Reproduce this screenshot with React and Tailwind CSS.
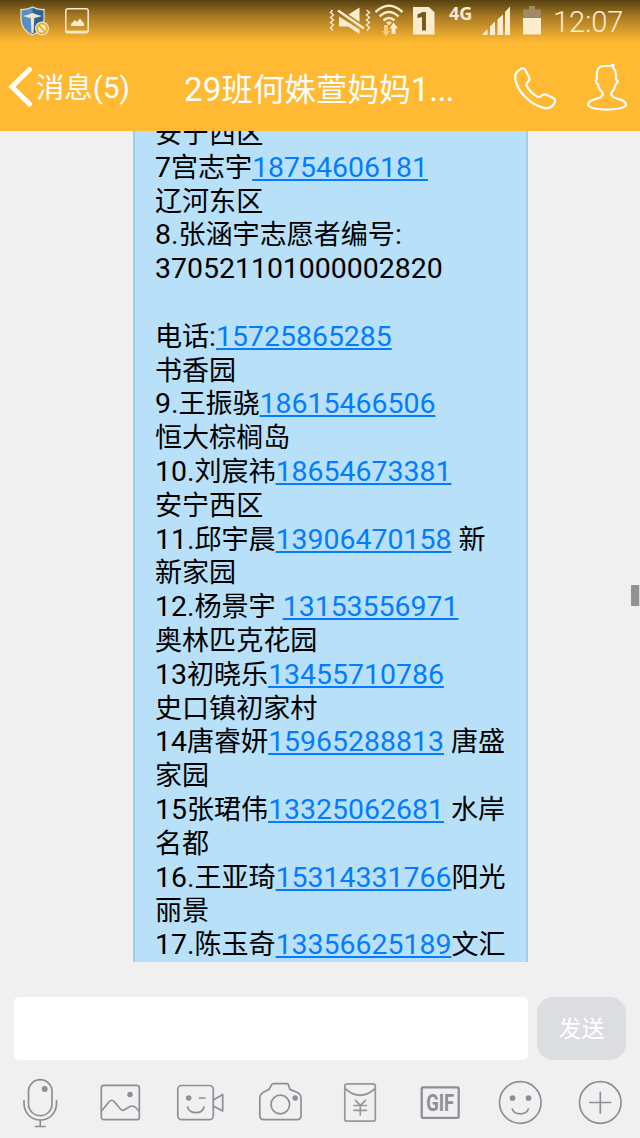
import React from 'react';

const LINES = [
    ['安宁西区'],
    ['7宫志宇', '18754606181'],
    ['辽河东区'],
    ['8.张涵宇志愿者编号:'],
    ['370521101000002820'],
    [],
    ['电话:', '15725865285'],
    ['书香园'],
    ['9.王振骁', '18615466506'],
    ['恒大棕榈岛'],
    ['10.刘宸祎', '18654673381'],
    ['安宁西区'],
    ['11.邱宇晨', '13906470158', ' 新'],
    ['新家园'],
    ['12.杨景宇 ', '13153556971'],
    ['奥林匹克花园'],
    ['13初晓乐', '13455710786'],
    ['史口镇初家村'],
    ['14唐睿妍', '15965288813', ' 唐盛'],
    ['家园'],
    ['15张珺伟', '13325062681', ' 水岸'],
    ['名都'],
    ['16.王亚琦', '15314331766', '阳光'],
    ['丽景'],
    ['17.陈玉奇', '13356625189', '文汇'],
];

// Chinese glyphs are set slightly smaller than the Roboto digits next to them
const Mixed = ({ text }) =>
    text.split(/([\u4e00-\u9fff]+)/).filter(Boolean).map((part, i) => (
        /[\u4e00-\u9fff]/.test(part)
            ? <span key={i} className="text-[0.951em]">{part}</span>
            : <span key={i}>{part}</span>
    ));

const StatusBar = () => (
    <div className="flex h-[42px] items-start bg-linear-to-b from-[#574212] via-[#a97b24] via-40% to-[#ffb932] text-[#fbecd0]">
        <svg className="ml-[20px] mt-[6px]" width="30" height="30" viewBox="0 0 30 30">
            <path d="M12.5 1Q7 4 1 3.5V13Q1 24 12.5 29Q24 24 24 13V3.5Q18 4 12.5 1Z" fill="#5892c4" stroke="#ecdcc0" strokeWidth="1.3" />
            <path d="M12.5 2Q18 5 23.3 4.3V13Q23 23 12.5 28Z" fill="#2d6291" />
            <path d="M3 10Q8 9 12.5 7Q17 9 22 10Q17 11.5 14.3 12L13.5 27H11.5L10.7 12Q7 11.5 3 10Z" fill="#f2e4cb" />
            <circle cx="22" cy="22.5" r="7" fill="#f3e1bc" />
            <circle cx="22" cy="22.5" r="4.8" fill="#fff0d0" stroke="#e9a92c" strokeWidth="1.8" />
            <path d="M18.7 19.2L25.3 25.8" stroke="#e9a92c" strokeWidth="1.8" />
        </svg>
        <svg className="ml-[15px] mt-[8px]" width="24" height="26" viewBox="0 0 24 26">
            <path d="M3 .8H21Q23.2 .8 23.2 3V22.5Q23.2 24.7 21 24.7H3Q.8 24.7 .8 22.5V3Q.8 .8 3 .8Z" fill="none" stroke="currentColor" strokeWidth="1.5" />
            <path d="M1 22.7H23V24.5H1Z" fill="currentColor" />
            <path d="M6 18V16L10 12L12 14L15 10.5L19 15.5V18Z" fill="currentColor" />
        </svg>
        <svg className="ml-[239px] mt-[6px] shrink-0" width="44" height="30" viewBox="0 0 44 30">
            <g fill="none" stroke="currentColor" strokeWidth="1.4">
                <path d="M4.5 4L2.5 6.5L5.5 9L2.5 11.5L5.5 14L2.5 16.5L5.5 19L2.5 21.5L5 24.5" />
                <path d="M38.5 4L41.5 6.5L38.5 9L41.5 11.5L38.5 14L41.5 16.5L38.5 19L41.5 21.5L39 24.5" />
            </g>
            <path d="M31.5 1.5V16L20.5 8.5ZM11 10.5L31.5 23.5V28L20 20.5H11Z" fill="currentColor" />
            <path d="M10 4.5L36 22.5" stroke="currentColor" strokeWidth="2.4" />
        </svg>
        <svg className="ml-[2px] mt-[4px] shrink-0" width="32" height="33" viewBox="0 0 32 33">
            <g fill="none" stroke="currentColor" strokeWidth="2.4">
                <path d="M1.5 8Q15 -4.5 28.5 8" />
                <path d="M5.5 12.5Q15 3.5 24.5 12.5" />
                <path d="M9.5 16.5Q15 11.5 20.5 16.5" />
            </g>
            <path d="M12 18.5Q15 16.5 18 18.5L15 21.5Z" fill="currentColor" />
            <path d="M10 21H14V27H16L12 32L8 27H10Z" fill="#f8cc7d" />
            <path d="M17.5 30H21.5V24.5H24L19.5 18.5L15.5 24.5H17.5Z" fill="currentColor" />
        </svg>
        <svg className="ml-[6px] mt-[7px] shrink-0" width="23" height="28" viewBox="0 0 23 28">
            <path d="M1 0H17L22.5 5.5V27.5H1Z" fill="currentColor" />
            <path d="M5.5 7.5L10.5 5H14V23.5H10V10L5.5 11Z" fill="#79581b" />
        </svg>
        <span className="ml-[14px] mt-[1px] w-[24px] shrink-0 font-['Open_Sans',sans-serif] text-[18px] font-bold leading-[25px]">4G</span>
        <svg className="ml-[8px] mt-[6px] shrink-0" width="31" height="30" viewBox="0 0 31 30">
            <path d="M1 29L6.5 23V29ZM9 29V20.5L14 15.5V29ZM16.5 29V13.5L22 8.5V29ZM24 29V6L29 .5V29Z" fill="currentColor" />
        </svg>
        <svg className="ml-[11px] mt-[6px] shrink-0" width="18" height="29" viewBox="0 0 18 29">
            <path d="M6 0H12V3.5H18V12H0V3.5H6Z" fill="#a28a60" />
            <path d="M0 12H18V28.5H0Z" fill="currentColor" />
        </svg>
        <span className="ml-[12px] mt-[5px] shrink-0 whitespace-nowrap text-[29px] font-light leading-[34px]">12:07</span>
    </div>
);

const Header = () => (
    <div className="flex h-[89px] items-start bg-[#ffb932] text-white">
        <svg className="ml-[8px] mt-[24px] shrink-0" width="25" height="42" viewBox="0 0 25 42">
            <path d="M21.5 3.5L4 20.8L21.5 38" fill="none" stroke="currentColor" strokeWidth="5" strokeLinecap="round" />
        </svg>
        <span className="ml-[3px] mt-[26px] w-[148px] shrink-0 whitespace-nowrap text-[29.8px] leading-[40px]"><Mixed text="消息(5)" /></span>
        <span className="mt-[28px] w-[330px] shrink-0 whitespace-nowrap text-[33.2px] leading-[40px]"><Mixed text="29班何姝萱妈妈1" /><span className="tracking-[-0.7px]">...</span></span>
        <svg className="mt-[25px] shrink-0" width="43" height="43" viewBox="0 0 43 43">
            <path d="M7 1.8L3.2 4.5Q-.2 8 2.2 16Q5.7 25.5 13.5 32Q22 39.8 32.5 41.3Q36.5 41.3 39.2 38L41 35Q41.8 32.5 39.3 31L32.5 27.7Q30 26.5 27.5 28.8Q25.5 30.5 23.5 29.7Q16 25.5 12.5 18.5Q12.2 16.7 14 14.8Q16.2 12.4 15 10L11.5 3.2Q9.8 .6 7 1.8Z" fill="none" stroke="currentColor" strokeWidth="2.2" />
        </svg>
        <svg className="ml-[29px] mt-[21px] shrink-0" width="42" height="48" viewBox="0 0 42 48">
            <path d="M11 9Q12 3.2 17.5 3H24L27.5 1.8L27.2 5Q30.5 7 30 16.5Q32.5 17 31 20L29.5 21.5Q29 26 26 29Q23.5 31.5 28 34.5L36 37.2Q41.5 40 39.5 43Q35 46.5 21 46.6Q7 46.5 2.8 43Q.5 40 6 37.2L14 34.5Q18.5 31.5 16 29Q12.5 26 12 21.5L10.5 20Q9 17 11 16.5Q10.3 13 11 9Z" fill="none" stroke="currentColor" strokeWidth="2.2" strokeLinejoin="round" />
        </svg>
    </div>
);

const Icon = ({ children }) => (
    <div className="flex w-[80px] justify-center">
        <svg width="50" height="52" viewBox="0 0 50 52" fill="none" stroke="#8e8e99" strokeWidth="1.7" strokeLinecap="round" strokeLinejoin="round">
            {children}
        </svg>
    </div>
);

const Toolbar = () => (
    <div className="flex pt-[16px]">
        <Icon>
            <rect x="13.5" y="3.7" width="23.5" height="36" rx="11.7" />
            <path d="M9 24.5V27C9 37 16 44 25.3 44S41.5 37 41.5 27V24.5M25.3 44V50.5M20.5 50.5H30" />
            <circle cx="29.7" cy="13" r="2.1" fill="#8e8e99" stroke="#8e8e99" />
        </Icon>
        <Icon>
            <rect x="6.3" y="9.4" width="38" height="34.3" rx="2.5" />
            <path d="M6.5 35L14.3 25.5Q16.5 23 19 25.5L25.5 33Q27.5 35.3 30 33.5L34 31Q37 29 40 31L44 35" />
            <circle cx="35" cy="18.5" r="1.9" fill="#8e8e99" />
        </Icon>
        <Icon>
            <rect x="2.8" y="9.5" width="35.5" height="34.2" rx="4" />
            <path d="M38.3 24L47.7 18.5V35L38.3 30M24.5 22H30M12.7 31C14 38.5 27.5 38.5 29 31" />
            <circle cx="13.7" cy="22" r="1.9" fill="#8e8e99" />
        </Icon>
        <Icon>
            <path d="M14.3 13.2L16.5 8.8Q17 7.6 18.5 7.6H32Q33.3 7.6 33.6 9L34.8 13.4L42 16.2Q46 18 46 22V39.5Q46 43.7 41.7 43.7H9Q4.8 43.7 4.8 39.5V22Q5 18 8.5 16.2Z" />
            <circle cx="25.3" cy="28.5" r="9.3" />
            <circle cx="40.2" cy="22" r="1.9" fill="#8e8e99" />
        </Icon>
        <Icon>
            <g stroke="#9a9792">
                <rect x="9.8" y="7.8" width="30.5" height="37.4" rx="2.3" />
                <path d="M10 12.5Q25 26 40.2 12.5M20.5 24.3L25.3 29.3L30.5 24.3M19 29.5H31.5M19 34.3H31.5M25.3 29.5V39" />
            </g>
        </Icon>
        <Icon>
            <rect x="6.7" y="11.3" width="37" height="30.5" rx="1" strokeWidth="2.3" />
            <text x="25.2" y="35.3" textAnchor="middle" textLength="28" lengthAdjust="spacingAndGlyphs" fontFamily="Roboto, sans-serif" fontWeight="700" fontSize="24.5" fill="#8e8e99" stroke="none">GIF</text>
        </Icon>
        <Icon>
            <circle cx="25.3" cy="26.5" r="20.8" />
            <path d="M17.3 33C19.5 39.5 31 39.5 33.3 33" />
            <circle cx="17.5" cy="22" r="2" fill="#8e8e99" />
            <circle cx="33.5" cy="22" r="2" fill="#8e8e99" />
        </Icon>
        <Icon>
            <circle cx="25.3" cy="26.5" r="20.8" />
            <path d="M25.3 16.3V37M15 26.5H35.7" />
        </Icon>
    </div>
);

export default function App() {
    return (
        <div className="flex h-[1138px] w-[640px] flex-col overflow-hidden bg-[#f0f0f0] font-['Roboto','Noto_Sans_CJK_SC',sans-serif]">
            <StatusBar />
            <Header />
            <div className="flex h-[831px] items-start justify-between overflow-hidden">
                <div className="ml-[133px] h-full w-[395px] overflow-hidden border-x-2 border-[#9dceee] bg-[#b8e0f8] pl-[20px] text-[28.45px] text-black">
                    <div className="-mt-[14px]">
                        {LINES.map((parts, i) => (
                            <div key={i} className="h-[33.8px] whitespace-pre leading-[33.8px]">
                                {parts.map((part, j) => (
                                    j === 1
                                        ? <a key={j} className="text-[#047cff] underline decoration-2 underline-offset-[2px]">{part}</a>
                                        : <Mixed key={j} text={part} />
                                ))}
                            </div>
                        ))}
                    </div>
                </div>
                <div className="mt-[454px] h-[21px] w-[9px] rounded-[1px] border-r border-[#d8d8d8] bg-[#919191]" />
            </div>
            <div className="flex pl-[14px] pt-[35px]">
                <div className="h-[63px] w-[514px] rounded-[5px] bg-white" />
                <button className="ml-[9px] h-[63px] w-[89px] rounded-[16px] bg-[#dcdde1] pt-[4px] text-[23px] text-white">发送</button>
            </div>
            <Toolbar />
        </div>
    );
}
